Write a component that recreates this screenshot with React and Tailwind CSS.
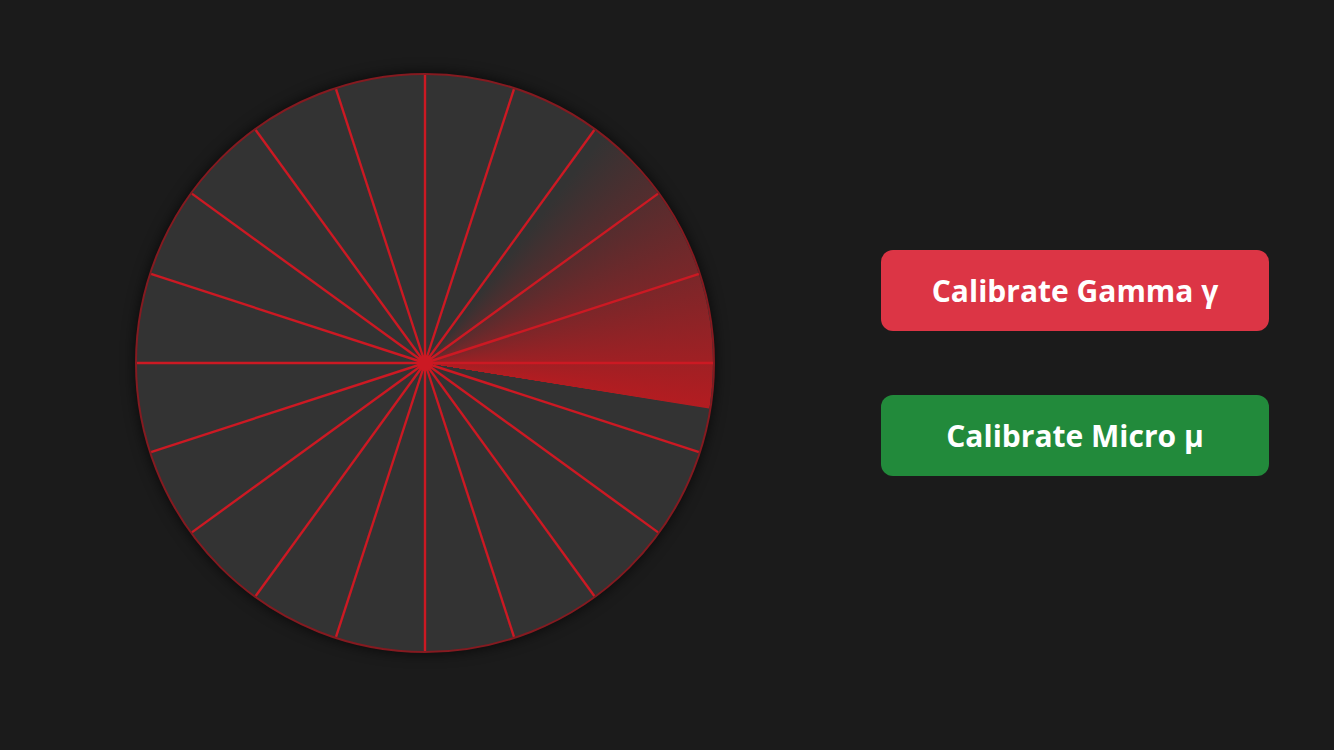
import React from "react";

const spokes = Array.from({ length: 20 }, (_, i) => {
  const a = (i * 18 * Math.PI) / 180;
  return { x: 290 + Math.sin(a) * 289, y: 290 - Math.cos(a) * 289 };
});

export default function App() {
  return (
    <div className="w-full h-screen bg-[#1b1b1b] flex items-center pl-[135px] pr-[65px] pb-[24px] font-['Open_Sans',sans-serif]">
      <div className="relative w-[580px] h-[580px] shrink-0 rounded-full bg-[#333333] border-2 border-[#851a20] shadow-[0_0_14px_rgba(0,0,0,0.7)] overflow-hidden">
        <div className="absolute inset-0 rounded-full bg-[conic-gradient(from_0deg,rgba(220,25,30,0)_0deg,rgba(220,25,30,0)_38deg,rgba(215,22,28,0.78)_99deg,rgba(0,0,0,0)_99.2deg)]" />
        <svg className="absolute inset-[-2px]" width="580" height="580" viewBox="0 0 580 580">
          {spokes.map((p, i) => (
            <line key={i} x1="290" y1="290" x2={p.x} y2={p.y} stroke="#cc1923" strokeWidth="2.4" />
          ))}
          <circle cx="290" cy="290" r="8" fill="#cc1923" />
        </svg>
      </div>
      <div className="ml-auto flex flex-col gap-[64px]">
        <button className="w-[388px] h-[81px] rounded-xl bg-[#dc3545] text-white font-bold text-[30px] flex items-center justify-center">
          Calibrate Gamma γ
        </button>
        <button className="w-[388px] h-[81px] rounded-xl bg-[#228a3b] text-white font-bold text-[30px] flex items-center justify-center">
          Calibrate Micro μ
        </button>
      </div>
    </div>
  );
}
